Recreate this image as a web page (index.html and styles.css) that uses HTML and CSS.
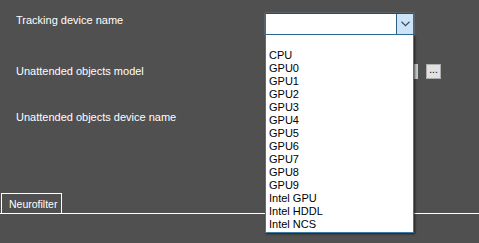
FILE: index.html
```html
<!DOCTYPE html>
<html>
<head>
<meta charset="utf-8">
<link rel="stylesheet" href="styles.css">
</head>
<body>
<div class="page">
  <div class="form">
    <div class="row row1">
      <div class="label">Tracking device name</div>
      <div class="combo">
        <div class="combo-field"></div>
        <div class="combo-btn">
          <svg width="9" height="6" viewBox="0 0 9 6"><path d="M0.5 0.8 L4.5 4.6 L8.5 0.8" fill="none" stroke="#3a4a5a" stroke-width="1.2"/></svg>
        </div>
        <ul class="dropdown">
          <li>&nbsp;</li>
          <li>CPU</li>
          <li>GPU0</li>
          <li>GPU1</li>
          <li>GPU2</li>
          <li>GPU3</li>
          <li>GPU4</li>
          <li>GPU5</li>
          <li>GPU6</li>
          <li>GPU7</li>
          <li>GPU8</li>
          <li>GPU9</li>
          <li>Intel GPU</li>
          <li>Intel HDDL</li>
          <li>Intel NCS</li>
        </ul>
      </div>
    </div>
    <div class="row row2">
      <div class="label">Unattended objects model</div>
      <div class="textbox"></div>
      <div class="dots">...</div>
    </div>
    <div class="row row3">
      <div class="label">Unattended objects device name</div>
    </div>
  </div>
  <div class="tabs">
    <div class="tab">Neurofilter</div>
  </div>
</div>
</body>
</html>
```
FILE: styles.css
```css
html, body {
  margin: 0;
  padding: 0;
  background: #505050;
}
body {
  width: 479px;
  height: 243px;
  overflow: hidden;
  font-family: "Liberation Sans", Arial, sans-serif;
  font-size: 11px;
  color: #ffffff;
}
.page {
  display: flex;
  flex-direction: column;
  height: 243px;
}
.form {
  display: flex;
  flex-direction: column;
  padding-top: 13px;
  height: 180px;
}
.row {
  display: flex;
  align-items: center;
  position: relative;
}
.label {
  width: 249px;
  padding-left: 16px;
  line-height: 13px;
}
.row1 {
  height: 22px;
  align-items: flex-start;
}
.row1 .label {
  margin-top: 1px;
}
.row2 {
  margin-top: 29px;
  height: 15px;
}
.row2 .label {
  margin-top: -1px;
}
.row3 {
  margin-top: 32px;
  height: 13px;
}
.combo {
  position: relative;
  width: 149px;
  height: 22px;
  display: flex;
  box-sizing: border-box;
  border: 1px solid #2f6f98;
  border-top-color: #1f4f70;
  background: #ffffff;
  box-shadow: 0 0 1px #8fc4e6;
}
.combo-field {
  flex: 1;
}
.combo-btn {
  width: 16px;
  background: #cce4f7;
  border-left: 1px solid #2f5f80;
  display: flex;
  align-items: center;
  justify-content: center;
}
.dropdown {
  position: absolute;
  left: -1px;
  top: 21px;
  width: 149px;
  box-sizing: border-box;
  margin: 0;
  padding: 0 0 1px 3px;
  list-style: none;
  background: #ffffff;
  border: 1px solid #3a7ba5;
  border-top: none;
  box-shadow: 1px 1px 2px rgba(0,0,0,0.6);
  color: #000000;
  z-index: 2;
}
.dropdown li {
  height: 13px;
  line-height: 13px;
}
.dropdown li:first-child {
  height: 14px;
}
.textbox {
  width: 152px;
  height: 15px;
  background: #c8c8c8;
  border-left: 1px solid #6a8aa0;
}
.dots {
  margin-left: 8px;
  width: 15px;
  height: 15px;
  box-sizing: border-box;
  background: #e1e1e1;
  border: 1px solid #adadad;
  color: #000;
  font-size: 10px;
  line-height: 10px;
  text-align: center;
}
.tabs {
  height: 20px;
  border-bottom: 1px solid #ffffff;
  display: flex;
  align-items: flex-end;
}
.tab {
  margin-left: 1px;
  height: 20px;
  box-sizing: border-box;
  padding: 0 4px 0 7px;
  border: 1px solid #ffffff;
  border-bottom: none;
  line-height: 20px;
  font-size: 10.5px;
}
```
